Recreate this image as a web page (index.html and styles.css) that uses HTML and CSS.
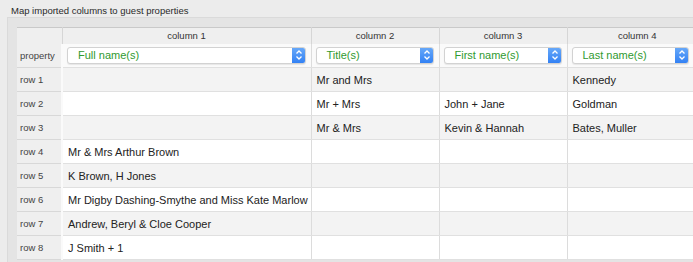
FILE: index.html
```html
<!DOCTYPE html>
<html lang="en">
<head>
    <meta charset="UTF-8" />
    <title>Map columns</title>
<link rel="stylesheet" href="styles.css">
</head>
<body>
    <div class="title">Map imported columns to guest properties</div>
    <div class="panel">
        <table class="grid">
            <tr class="head">
                <th class="rowhead"></th>
                <th class="c1">column 1</th>
                <th class="c2">column 2</th>
                <th class="c3">column 3</th>
                <th class="c4">column 4</th>
            </tr>
            <tr class="prop">
                <td class="rowhead">property</td>
                <td><div class="popup"><span>Full name(s)</span><span class="step"><svg width="8" height="12" viewBox="0 0 8 12"><path d="M1.5 4.5 L4 2 L6.5 4.5 M1.5 7.5 L4 10 L6.5 7.5" fill="none" stroke="#fff" stroke-width="1.3"/></svg></span></div></td>
                <td><div class="popup"><span>Title(s)</span><span class="step"><svg width="8" height="12" viewBox="0 0 8 12"><path d="M1.5 4.5 L4 2 L6.5 4.5 M1.5 7.5 L4 10 L6.5 7.5" fill="none" stroke="#fff" stroke-width="1.3"/></svg></span></div></td>
                <td><div class="popup"><span>First name(s)</span><span class="step"><svg width="8" height="12" viewBox="0 0 8 12"><path d="M1.5 4.5 L4 2 L6.5 4.5 M1.5 7.5 L4 10 L6.5 7.5" fill="none" stroke="#fff" stroke-width="1.3"/></svg></span></div></td>
                <td><div class="popup last"><span>Last name(s)</span><span class="step"><svg width="8" height="12" viewBox="0 0 8 12"><path d="M1.5 4.5 L4 2 L6.5 4.5 M1.5 7.5 L4 10 L6.5 7.5" fill="none" stroke="#fff" stroke-width="1.3"/></svg></span></div></td>
            </tr>
            <tr class="odd">
                <td class="rowhead">row 1</td>
                <td></td>
                <td>Mr and Mrs</td>
                <td></td>
                <td>Kennedy</td>
            </tr>
            <tr>
                <td class="rowhead">row 2</td>
                <td></td>
                <td>Mr + Mrs</td>
                <td>John + Jane</td>
                <td>Goldman</td>
            </tr>
            <tr class="odd">
                <td class="rowhead">row 3</td>
                <td></td>
                <td>Mr &amp; Mrs</td>
                <td>Kevin &amp; Hannah</td>
                <td>Bates, Muller</td>
            </tr>
            <tr>
                <td class="rowhead">row 4</td>
                <td>Mr &amp; Mrs Arthur Brown</td>
                <td></td>
                <td></td>
                <td></td>
            </tr>
            <tr class="odd">
                <td class="rowhead">row 5</td>
                <td>K Brown, H Jones</td>
                <td></td>
                <td></td>
                <td></td>
            </tr>
            <tr>
                <td class="rowhead">row 6</td>
                <td>Mr Digby Dashing-Smythe and Miss Kate Marlow</td>
                <td></td>
                <td></td>
                <td></td>
            </tr>
            <tr class="odd">
                <td class="rowhead">row 7</td>
                <td>Andrew, Beryl &amp; Cloe Cooper</td>
                <td></td>
                <td></td>
                <td></td>
            </tr>
            <tr>
                <td class="rowhead">row 8</td>
                <td>J Smith + 1</td>
                <td></td>
                <td></td>
                <td></td>
            </tr>
        </table>
    </div>
</body>
</html>
```

FILE: styles.css
```css
* {margin: 0; padding: 0; box-sizing: border-box;}
body {
    background: #ececec;
    font-family: "Liberation Sans", Arial, sans-serif;
    color: #222;
    overflow: hidden;
    width: 693px;
    height: 262px;
}
.title {
    font-size: 9.5px;
    color: #2a2a2a;
    padding: 5px 0 0 11px;
    height: 17px;
}
.panel {
    margin-left: 7px;
    width: 686px;
    height: 245px;
    overflow: hidden;
    background: #e4e4e4;
    border: 1px solid #dadada;
    border-right: none;
    border-bottom: none;
    padding: 9px 0 0 9px;
}
.grid {
    border-collapse: collapse;
    table-layout: fixed;
    width: 690px;
    background: #fff;
    border-top: 1px solid #c9c9c9;
}
.grid th {
    height: 16px;
    font-weight: normal;
    font-size: 9.5px;
    color: #333;
    background: #efefef;
    border-right: 1px solid #d6d6d6;
    text-align: center;
}
.grid .rowhead {width: 45px;}
.grid .c1 {width: 249px;}
.grid .c2, .grid .c3 {width: 128px;}
.grid .c4 {width: 140px; border-right: none;}
.grid td {
    height: 24px;
    font-size: 11px;
    padding: 0 0 0 5px;
    border-right: 1px solid #dcdcdc;
    border-bottom: 1px solid #e0e0e0;
    white-space: nowrap;
    overflow: hidden;
}
.grid tr.odd td {background: #f3f3f3;}
.grid td.rowhead {
    background: #efefef;
    font-size: 9.5px;
    color: #444;
    padding-left: 3px;
    border-bottom: 1px solid #d8d8d8;
    border-right: 2px solid #fafafa;
}
.grid tr.odd td.rowhead {background: #efefef;}
.prop td {
    background: #fafafa;
    padding: 0 5px 0 4px;
    border-bottom: 1px solid #e0e0e0;
}
.popup {
    height: 17px;
    display: flex;
    align-items: center;
    justify-content: space-between;
    background: #fff;
    border: 1px solid #d2d2d2;
    border-radius: 3px;
    box-shadow: 0 1px 1px rgba(0,0,0,0.08);
    font-size: 11px;
    color: #2f9a2f;
    padding-left: 10px;
    overflow: hidden;
}
.popup.last {width: 117px;}
.step {
    width: 14px;
    height: 17px;
    margin-right: -1px;
    display: flex;
    align-items: center;
    justify-content: center;
    background: linear-gradient(#6aaaf9, #2f7ff4);
    border-radius: 0 3px 3px 0;
}
```
